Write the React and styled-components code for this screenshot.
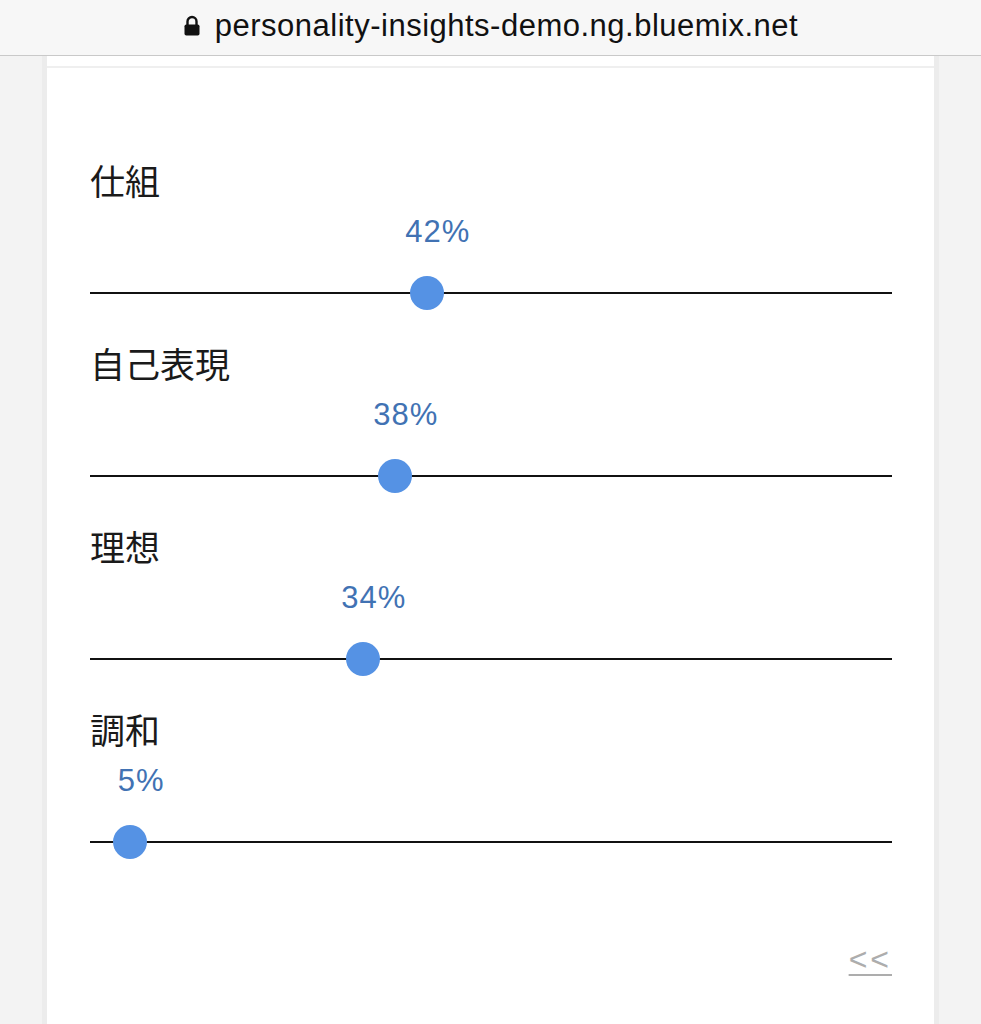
import React from 'react'
import styled, { createGlobalStyle } from 'styled-components'

const GlobalStyle = createGlobalStyle`
  html, body {
    margin: 0;
    padding: 0;
  }
  body {
    background: #f3f3f3;
    font-family: "Liberation Sans", "Noto Sans CJK JP", sans-serif;
    -webkit-font-smoothing: antialiased;
  }
`

const traits = [
  { name: '仕組', value: 42 },
  { name: '自己表現', value: 38 },
  { name: '理想', value: 34 },
  { name: '調和', value: 5 },
]

const LockIcon = () => (
  <svg width="18" height="21" viewBox="0 0 18 21">
    <path d="M4.5 10V6.5a4.5 4.5 0 0 1 9 0V10" fill="none" stroke="#111" strokeWidth="2.4" />
    <rect x="1.5" y="9.5" width="15" height="11" rx="1.8" fill="#111" />
  </svg>
)

const App = () => {
  return (
    <Page>
      <GlobalStyle />
      <AddressBar>
        <LockIcon />
        <Url>personality-insights-demo.ng.bluemix.net</Url>
      </AddressBar>
      <Main>
        <Card>
          <TopStrip />
          <TraitList>
            {traits.map((t) => (
              <Trait key={t.name}>
                <TraitName>{t.name}</TraitName>
                <ValueRow>
                  <ValueTag style={{ left: `calc(${t.value}% + 11px)` }}>{t.value}%</ValueTag>
                </ValueRow>
                <Track>
                  <Thumb style={{ left: `${t.value}%` }} />
                </Track>
              </Trait>
            ))}
          </TraitList>
          <Footer>
            <BackLink href="#">&lt;&lt;</BackLink>
          </Footer>
        </Card>
      </Main>
    </Page>
  )
}

export default App

const Page = styled.div`
  min-height: 100vh;
  display: flex;
  flex-direction: column;
  background: #f3f3f3;
`

const AddressBar = styled.div`
  height: 56px;
  flex-shrink: 0;
  display: flex;
  align-items: center;
  justify-content: center;
  gap: 14px;
  background: #f7f7f7;
  border-bottom: 1px solid #c9c9c9;
  box-sizing: border-box;
  padding-bottom: 4px;
`

const Url = styled.span`
  font-size: 31px;
  letter-spacing: 0.5px;
  color: #111;
  line-height: 1;
`

const Main = styled.div`
  flex: 1;
  display: flex;
  padding: 0 47px;
`

const Card = styled.div`
  flex: 1;
  background: #fff;
  box-shadow: -5px 0 0 #ececec, 5px 0 0 #ececec;
  display: flex;
  flex-direction: column;
`

const TopStrip = styled.div`
  height: 10px;
  border-bottom: 2px solid #efefef;
`

const TraitList = styled.div`
  display: flex;
  flex-direction: column;
  gap: 33px;
  padding: 92px 42px 0 43px;
`

const Trait = styled.div`
  display: flex;
  flex-direction: column;
`

const TraitName = styled.div`
  font-family: "Noto Sans CJK JP", sans-serif;
  font-size: 35px;
  line-height: 40px;
  color: #1a1a1a;
  margin-bottom: 15px;
`

const ValueRow = styled.div`
  position: relative;
  height: 34px;
  margin-bottom: 27px;
`

const ValueTag = styled.span`
  position: absolute;
  top: 0;
  transform: translateX(-50%);
  font-size: 31px;
  line-height: 34px;
  letter-spacing: 1px;
  color: #4172b3;
  white-space: nowrap;
`

const Track = styled.div`
  position: relative;
  height: 34px;
  &::before {
    content: '';
    position: absolute;
    left: 0;
    right: 0;
    top: 16px;
    height: 2px;
    background: #111;
  }
`

const Thumb = styled.div`
  position: absolute;
  top: 0;
  width: 34px;
  height: 34px;
  border-radius: 50%;
  background: #5592e4;
  transform: translateX(-50%);
`

const Footer = styled.div`
  display: flex;
  justify-content: flex-end;
  padding: 82px 42px 40px;
`

const BackLink = styled.a`
  font-size: 32px;
  line-height: 36px;
  letter-spacing: 3px;
  color: #adadad;
  text-decoration: underline;
  text-decoration-thickness: 2px;
  text-underline-offset: 4px;
`
